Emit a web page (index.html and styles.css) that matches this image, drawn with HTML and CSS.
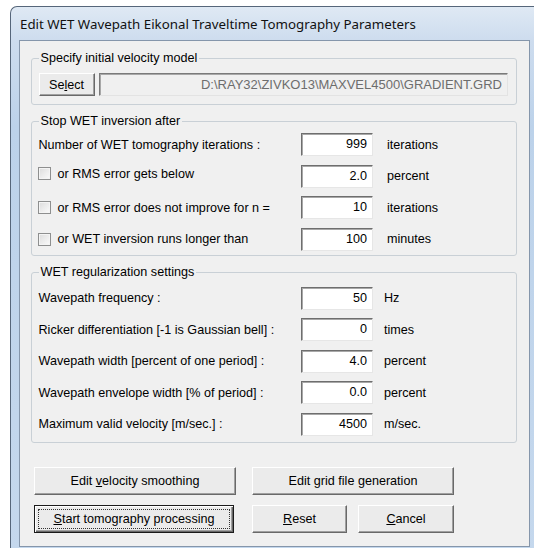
FILE: index.html
```html
<!DOCTYPE html>
<html lang="en">
<head>
<meta charset="utf-8">
<title>Edit WET Wavepath Eikonal Traveltime Tomography Parameters</title>
<link rel="stylesheet" href="styles.css">
</head>
<body>
<div class="window">
  <div class="titlebar">Edit WET Wavepath Eikonal Traveltime Tomography Parameters</div>
  <div class="client">
    <fieldset class="group group-model">
      <legend>Specify initial velocity model</legend>
      <div class="model-row">
        <button class="btn btn-select" type="button">Se<u>l</u>ect</button>
        <div class="path">D:\RAY32\ZIVKO13\MAXVEL4500\GRADIENT.GRD</div>
      </div>
    </fieldset>

    <fieldset class="group group-stop">
      <legend>Stop WET inversion after</legend>
      <div class="row">
        <span class="label">Number of WET tomography iterations :</span>
        <span class="field">999</span>
        <span class="unit">iterations</span>
      </div>
      <div class="row">
        <label class="check check-high"><span class="box"></span>or RMS error gets below</label>
        <span class="field">2.0</span>
        <span class="unit">percent</span>
      </div>
      <div class="row">
        <label class="check"><span class="box"></span>or RMS error does not improve for n =</label>
        <span class="field">10</span>
        <span class="unit">iterations</span>
      </div>
      <div class="row">
        <label class="check"><span class="box"></span>or WET inversion runs longer than</label>
        <span class="field">100</span>
        <span class="unit">minutes</span>
      </div>
    </fieldset>

    <fieldset class="group group-reg">
      <legend>WET regularization settings</legend>
      <div class="row">
        <span class="label">Wavepath frequency :</span>
        <span class="field">50</span>
        <span class="unit">Hz</span>
      </div>
      <div class="row">
        <span class="label">Ricker differentiation [-1 is Gaussian bell] :</span>
        <span class="field">0</span>
        <span class="unit">times</span>
      </div>
      <div class="row">
        <span class="label">Wavepath width [percent of one period] :</span>
        <span class="field">4.0</span>
        <span class="unit">percent</span>
      </div>
      <div class="row">
        <span class="label">Wavepath envelope width [% of period] :</span>
        <span class="field">0.0</span>
        <span class="unit">percent</span>
      </div>
      <div class="row">
        <span class="label">Maximum valid velocity [m/sec.] :</span>
        <span class="field">4500</span>
        <span class="unit">m/sec.</span>
      </div>
    </fieldset>

    <div class="actions">
      <div class="action-row">
        <button class="btn btn-wide" type="button">Edit <u>v</u>elocity smoothing</button>
        <button class="btn btn-wide" type="button">Edit <u>g</u>rid file generation</button>
      </div>
      <div class="action-row">
        <button class="btn btn-start btn-default" type="button"><span class="focus"><u>S</u>tart tomography processing</span></button>
        <button class="btn btn-reset" type="button"><u>R</u>eset</button>
        <button class="btn btn-cancel" type="button"><u>C</u>ancel</button>
      </div>
    </div>
  </div>
</div>
</body>
</html>
```

FILE: styles.css
```css
* {
  box-sizing: border-box;
}

html,
body {
  margin: 0;
  height: 100%;
  overflow: hidden;
  background: #ffffff;
}

body {
  font-family: "Liberation Sans", Arial, sans-serif;
  font-size: 12.6px;
  color: #000;
}

/* window frame */
.window {
  margin: 6px 0 0 10px;
  width: 524px;
  height: 560px;
  padding: 0 4px 0 8px;
  border: 1px solid #56667a;
  border-right: none;
  border-radius: 7px 0 0 0;
  background: linear-gradient(#dfe9f4, #cddcee 34px, #bcd2ea 120px, #c5d8ed);
}

.titlebar {
  height: 33px;
  padding-left: 1px;
  display: flex;
  align-items: center;
  font-family: "Noto Sans", "Open Sans", sans-serif;
  font-size: 13.3px;
  color: #111;
  white-space: nowrap;
}

.client {
  height: 507px;
  padding: 10px 12px 0 11px;
  border: 1px solid #8596ab;
  background: #f0f0f0;
}

/* group boxes */
.group {
  margin: 0;
  min-width: 0;
  border: 1px solid #c9d0d6;
  border-radius: 3px;
  padding: 0 8px 0 6.5px;
}

.group legend {
  padding: 0 2px;
  line-height: 15px;
}

.group-model {
  padding-top: 7px;
  padding-bottom: 8px;
}

.group-stop {
  margin-top: 9px;
}

.group-stop .row {
  height: 31.5px;
}

.group-reg {
  margin-top: 8.5px;
  padding-top: 3px;
  padding-bottom: 1.5px;
}

.group-reg .row {
  height: 31.5px;
}

.group-reg .unit {
  padding-left: 11px;
}

.model-row {
  display: flex;
  align-items: center;
  gap: 4px;
}

.path {
  flex: 1;
  height: 23px;
  padding-right: 5px;
  line-height: 21px;
  text-align: right;
  font-size: 13px;
  color: #6d6d6d;
  background: #f0f0f0;
  border: 1px solid;
  border-color: #7a7a7a #e3e3e3 #e3e3e3 #7a7a7a;
  box-shadow: inset 1px 1px #a8a8a8;
}

/* form rows */
.row {
  display: grid;
  grid-template-columns: 262.5px 72px 1fr;
  align-items: center;
}

.label {
  white-space: nowrap;
}

.check {
  display: flex;
  align-items: center;
  gap: 7px;
  margin-left: -1px;
  white-space: nowrap;
}

.check-high {
  margin-bottom: 5px;
}

.box {
  width: 13px;
  height: 13px;
  border: 1px solid #8e8f8f;
  background: linear-gradient(135deg, #dcdcdc, #fbfbfb);
  box-shadow: inset 0 0 0 1px #f4f4f4;
}

.field {
  height: 23px;
  padding-right: 5px;
  line-height: 21px;
  text-align: right;
  background: #fff;
  border: 1px solid;
  border-color: #6e6e6e #e6e6e6 #e6e6e6 #6e6e6e;
  box-shadow: inset 1px 1px #a8a8a8;
}

.unit {
  padding-left: 14px;
  white-space: nowrap;
}

/* push buttons */
.btn {
  font: inherit;
  color: #000;
  padding: 0;
  background: #ebebeb;
  border: 1px solid;
  border-color: #ffffff #696969 #696969 #ffffff;
  box-shadow: inset -1px -1px #a0a0a0;
  white-space: nowrap;
}

.btn-select {
  width: 56px;
  height: 23px;
}

.actions {
  margin: 24px 0 0 3px;
  display: flex;
  flex-direction: column;
  gap: 10px;
}

.action-row {
  display: flex;
  height: 28px;
}

.btn-wide {
  width: 202px;
}

.btn-wide + .btn-wide {
  margin-left: 16px;
}

.btn-start {
  width: 200px;
  margin-right: 18px;
}

.btn-reset {
  width: 95px;
  margin-right: 11px;
}

.btn-cancel {
  width: 96px;
}

.btn-default {
  border: 1px solid #1a1a1a;
  box-shadow: inset 1px 1px #fff, inset -1px -1px #696969, inset -2px -2px #a0a0a0;
  padding: 3px;
}

.focus {
  display: flex;
  align-items: center;
  justify-content: center;
  height: 100%;
  border: 1px dotted #333;
}
```
